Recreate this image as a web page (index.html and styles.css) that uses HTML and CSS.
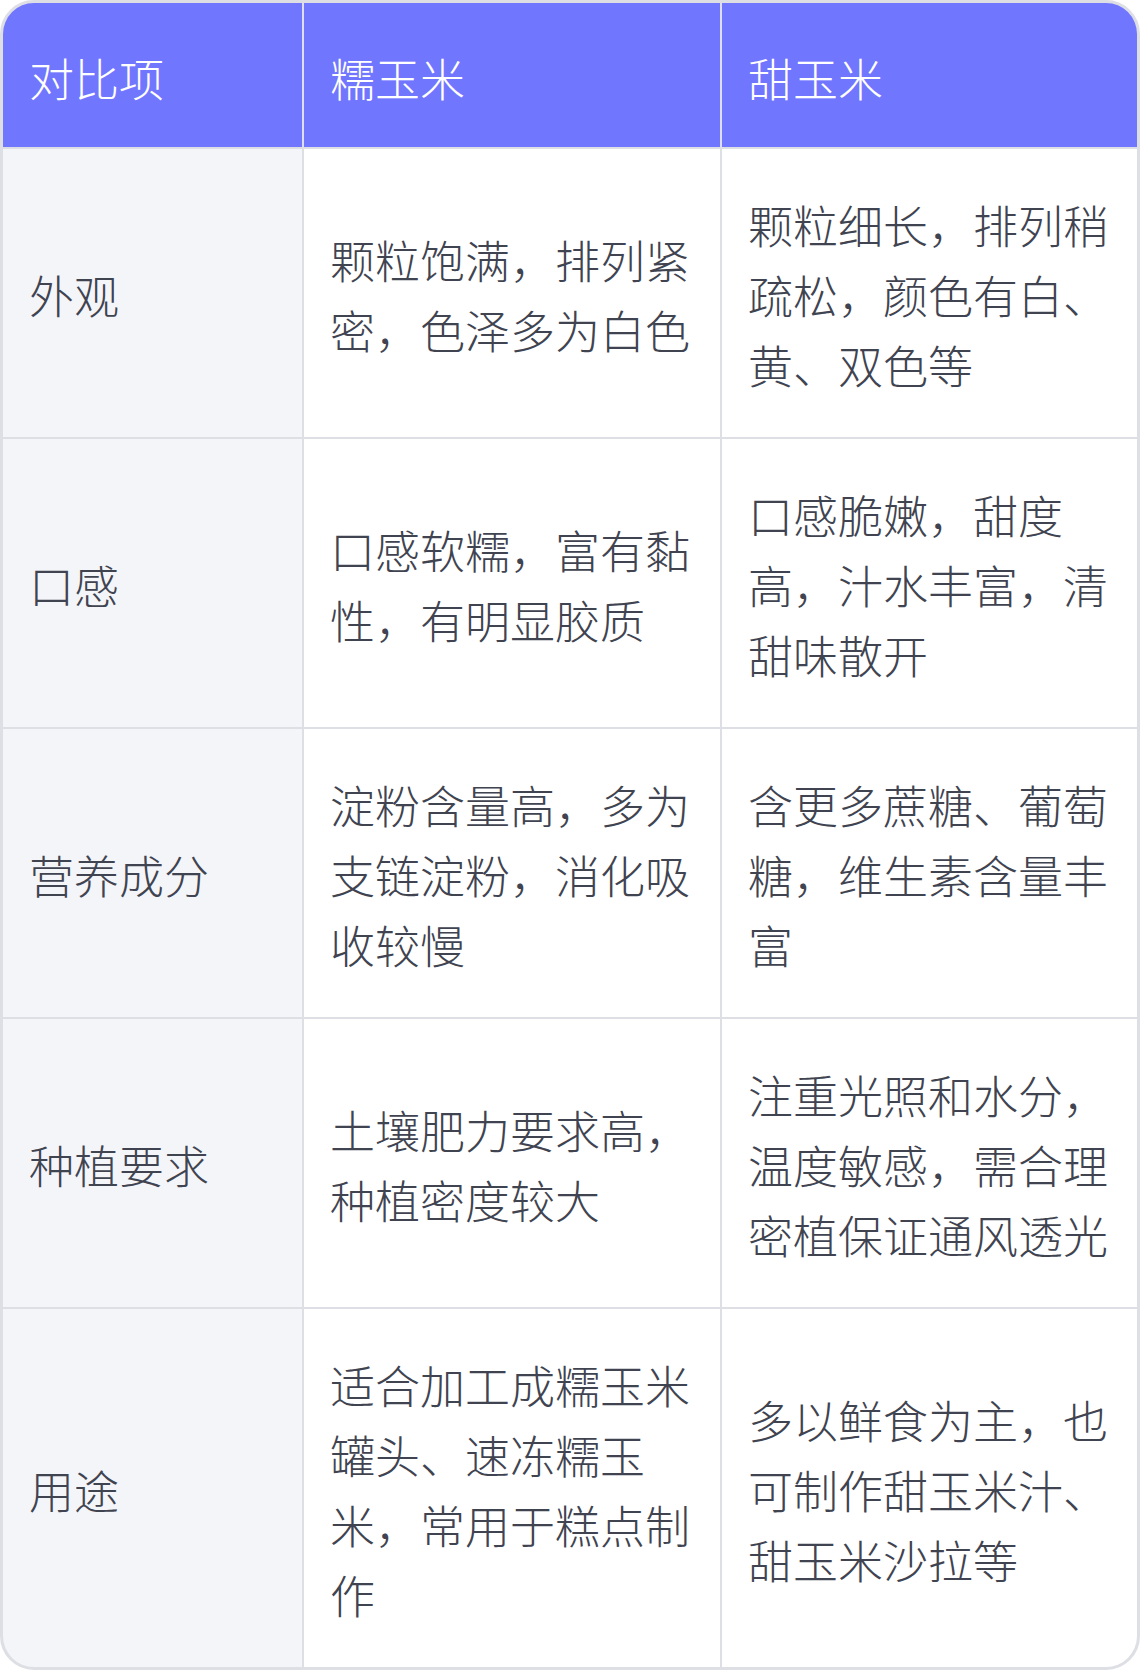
FILE: index.html
```html
<!DOCTYPE html>
<html lang="zh-CN">
<head>
<meta charset="utf-8">
<link rel="stylesheet" href="styles.css">
</head>
<body>
<div class="table">
  <div class="cell head">对比项</div>
  <div class="cell head">糯玉米</div>
  <div class="cell head">甜玉米</div>

  <div class="cell label">外观</div>
  <div class="cell">颗粒饱满，排列紧密，色泽多为白色</div>
  <div class="cell">颗粒细长，排列稍疏松，颜色有白、黄、双色等</div>

  <div class="cell label">口感</div>
  <div class="cell">口感软糯，富有黏性，有明显胶质</div>
  <div class="cell">口感脆嫩，甜度高，汁水丰富，清甜味散开</div>

  <div class="cell label">营养成分</div>
  <div class="cell">淀粉含量高，多为支链淀粉，消化吸收较慢</div>
  <div class="cell">含更多蔗糖、葡萄糖，维生素含量丰富</div>

  <div class="cell label">种植要求</div>
  <div class="cell">土壤肥力要求高，种植密度较大</div>
  <div class="cell">注重光照和水分，温度敏感，需合理密植保证通风透光</div>

  <div class="cell label">用途</div>
  <div class="cell">适合加工成糯玉米罐头、速冻糯玉米，常用于糕点制作</div>
  <div class="cell">多以鲜食为主，也可制作甜玉米汁、甜玉米沙拉等</div>
</div>
</body>
</html>
```

FILE: styles.css
```css
html, body {
  margin: 0;
  padding: 0;
  background: #ffffff;
}

.table {
  width: 1140px;
  box-sizing: border-box;
  border: 3px solid #dedfe5;
  border-radius: 34px;
  overflow: hidden;
  display: grid;
  grid-template-columns: 299px 416px 415px;
  gap: 2px;
  background: #dedfe5;
  font-family: "Noto Sans CJK SC", "Noto Sans", sans-serif;
  font-weight: 300;
  font-size: 45px;
  line-height: 70px;
  color: #404350;
}

.cell {
  background: #ffffff;
  padding: 41px 26px 37px;
  display: flex;
  align-items: center;
  word-break: break-all;
}

.head {
  background: #7176ff;
  color: #ffffff;
  padding: 40px 26px 34px;
}

.label {
  background: #f4f5f9;
}
```
